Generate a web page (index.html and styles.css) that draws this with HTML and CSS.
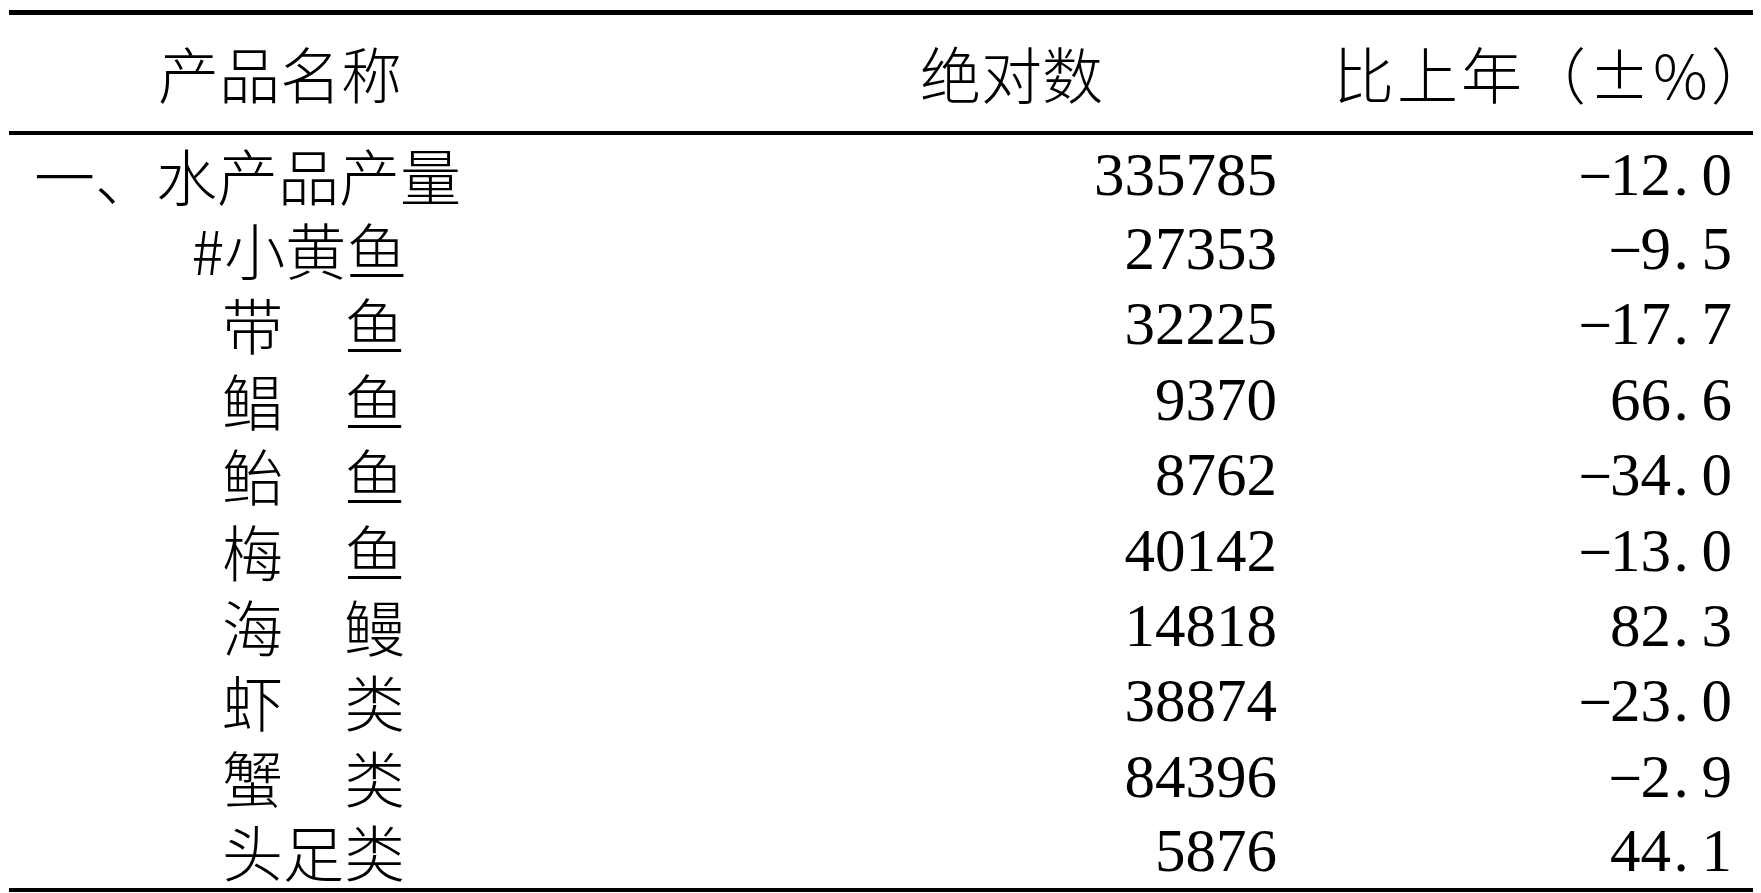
FILE: index.html
```html
<!DOCTYPE html>
<html lang="zh-CN">
<head>
<meta charset="utf-8">
<title>水产品产量</title>
<link rel="stylesheet" href="styles.css">
</head>
<body>
<table class="stats">
  <colgroup>
    <col class="c-name">
    <col class="c-abs">
    <col class="c-pct">
  </colgroup>
  <thead>
    <tr>
      <th class="h-name">产品名称</th>
      <th class="h-abs">绝对数</th>
      <th class="h-pct">比上年（±%<span class="close">）</span></th>
    </tr>
  </thead>
  <tbody>
    <tr><td class="name top">一、水产品产量</td><td class="num">335785</td><td class="pct"><span class="neg">-</span>12<span class="dot">.</span>0</td></tr>
    <tr><td class="name sub hash">#小黄鱼</td><td class="num">27353</td><td class="pct"><span class="neg">-</span>9<span class="dot">.</span>5</td></tr>
    <tr><td class="name sub">带　鱼</td><td class="num">32225</td><td class="pct"><span class="neg">-</span>17<span class="dot">.</span>7</td></tr>
    <tr><td class="name sub">鲳　鱼</td><td class="num">9370</td><td class="pct">66<span class="dot">.</span>6</td></tr>
    <tr><td class="name sub">鲐　鱼</td><td class="num">8762</td><td class="pct"><span class="neg">-</span>34<span class="dot">.</span>0</td></tr>
    <tr><td class="name sub">梅　鱼</td><td class="num">40142</td><td class="pct"><span class="neg">-</span>13<span class="dot">.</span>0</td></tr>
    <tr><td class="name sub">海　鳗</td><td class="num">14818</td><td class="pct">82<span class="dot">.</span>3</td></tr>
    <tr><td class="name sub">虾　类</td><td class="num">38874</td><td class="pct"><span class="neg">-</span>23<span class="dot">.</span>0</td></tr>
    <tr><td class="name sub">蟹　类</td><td class="num">84396</td><td class="pct"><span class="neg">-</span>2<span class="dot">.</span>9</td></tr>
    <tr class="last"><td class="name sub">头足类</td><td class="num">5876</td><td class="pct">44<span class="dot">.</span>1</td></tr>
  </tbody>
</table>
</body>
</html>
```
FILE: styles.css
```css
html, body {
  margin: 0;
  padding: 0;
  background: #ffffff;
}

body {
  padding: 10px 0 0 9px;
  color: #000000;
  font-family: "Noto Sans CJK SC", sans-serif;
  font-weight: 300;
}

.stats {
  border-collapse: collapse;
  table-layout: fixed;
  width: 1744px;
  font-size: 61px;
  line-height: 1;
}

.c-name { width: 691px; }
.c-abs { width: 605px; }
.c-pct { width: 448px; }

.stats thead tr {
  height: 120px;
  border-top: 5px solid #000;
  border-bottom: 4px solid #000;
}

.stats tbody tr {
  height: 75.4px;
}

.stats tbody tr.last {
  height: 79.4px;
  border-bottom: 4px solid #000;
}

.stats th,
.stats td {
  padding: 0;
  vertical-align: middle;
  white-space: nowrap;
  font-weight: 300;
}

.stats .h-name {
  text-align: left;
  padding-left: 149px;
}

.stats .h-abs {
  text-align: left;
  padding-left: 220px;
}

.stats .h-pct {
  text-align: left;
  padding-left: 28px;
  letter-spacing: 3px;
}

.stats .h-pct .close {
  letter-spacing: 0;
  font-feature-settings: "halt" 1;
}

.stats .name {
  text-align: left;
  padding-top: 6px;
}

.stats .name.top {
  padding-left: 25px;
}

.stats .name.sub {
  padding-left: 213px;
}

.stats .name.hash {
  text-indent: -0.5em;
}

.stats .num,
.stats .pct {
  font-family: "Liberation Serif", serif;
  font-weight: 400;
  text-align: right;
  padding-top: 6px;
}

.stats tr.last td {
  padding-bottom: 4px;
}

.stats .num {
  padding-right: 28px;
}

.stats .pct {
  padding-right: 21px;
}

.dot {
  display: inline-block;
  width: 0.5em;
  text-align: left;
  text-indent: 0.04em;
}

.neg {
  display: inline-block;
  width: 0.5em;
  text-align: center;
  transform: translateY(-0.04em) scaleX(1.75) scaleY(0.7);
}
```
